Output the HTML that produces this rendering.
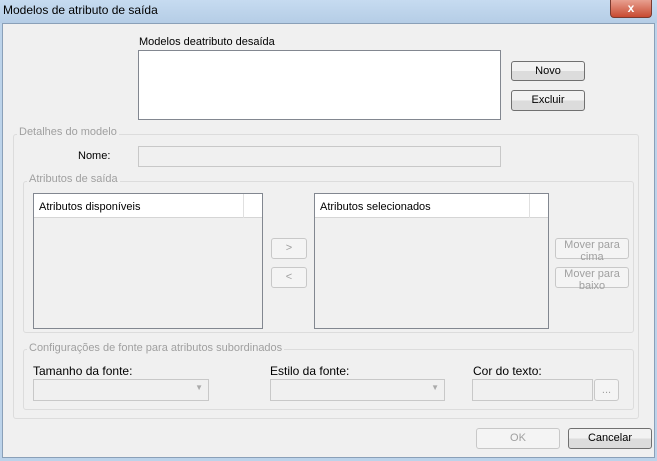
<!DOCTYPE html>
<html><head><meta charset="utf-8"><style>
*{box-sizing:border-box;margin:0;padding:0}
body{width:657px;height:461px;overflow:hidden;font-family:"Liberation Sans",sans-serif;font-size:11px;color:#000;background:#bcd3ea;position:relative}
.a{position:absolute}
.title{left:0;top:0;width:657px;height:23px;background:linear-gradient(#c6dbf0,#b5cde6)}
.client{left:2px;top:23px;width:653px;height:435px;background:#f0f0f0;border:1px solid #8aa0b8}
.btn{position:absolute;border:1px solid #707070;border-radius:3px;background:linear-gradient(#f2f2f2 50%,#dcdcdc 50%);text-align:center;font-size:11px}
.dis{border-color:#c8c8c8;background:#f4f4f4;color:#a0a0a0}
.grp{position:absolute;border:1px solid #dcdcdc;border-radius:3px}
.gl{position:absolute;background:#f0f0f0;color:#a0a0a0;padding:0 2px;font-size:11px}
.box{position:absolute;border:1px solid #abadb3}
</style></head><body>
<div class="a title"></div>
<div class="a" style="left:3px;top:3px;font-size:12px">Modelos de atributo de saída</div>
<div class="a" style="left:610px;top:0;width:42px;height:18px;background:linear-gradient(#e8a090,#c84a32);border:1px solid #7a3a30;border-top:none;border-radius:0 0 4px 4px;color:#fff;font-weight:bold;text-align:center;font-size:12px;line-height:16px">x</div>
<div class="a client"></div>
<div class="a" style="left:139px;top:36px">Modelos deatributo desaída</div>
<div class="box" style="left:138px;top:50px;width:363px;height:70px;background:#fff;border-color:#828790"></div>
<div class="btn" style="left:511px;top:61px;width:74px;height:20px;line-height:18px">Novo</div>
<div class="btn" style="left:511px;top:90px;width:74px;height:21px;line-height:19px">Excluir</div>
<div class="grp" style="left:13px;top:134px;width:626px;height:285px"></div>
<div class="gl" style="left:17px;top:126px">Detalhes do modelo</div>
<div class="a" style="left:78px;top:150px">Nome:</div>
<div class="box" style="left:138px;top:146px;width:363px;height:21px;background:#f0f0f0;border-color:#c8c8c8"></div>
<div class="grp" style="left:23px;top:181px;width:611px;height:152px"></div>
<div class="gl" style="left:27px;top:173px">Atributos de saída</div>
<div class="box" style="left:33px;top:193px;width:230px;height:136px;border-color:#828790"></div>
<div class="a" style="left:34px;top:194px;width:228px;height:24px;background:#fff;border-bottom:1px solid #d5d5d5"></div>
<div class="a" style="left:243px;top:194px;width:1px;height:24px;background:#e0e0e0"></div>
<div class="a" style="left:39px;top:201px">Atributos disponíveis</div>
<div class="box" style="left:314px;top:193px;width:235px;height:136px;border-color:#828790"></div>
<div class="a" style="left:315px;top:194px;width:233px;height:24px;background:#fff;border-bottom:1px solid #d5d5d5"></div>
<div class="a" style="left:529px;top:194px;width:1px;height:24px;background:#e0e0e0"></div>
<div class="a" style="left:320px;top:201px">Atributos selecionados</div>
<div class="btn dis" style="left:271px;top:238px;width:36px;height:21px;line-height:19px">&gt;</div>
<div class="btn dis" style="left:271px;top:267px;width:36px;height:21px;line-height:19px">&lt;</div>
<div class="btn dis" style="left:555px;top:238px;width:74px;height:21px;line-height:12px">Mover para cima</div>
<div class="btn dis" style="left:555px;top:267px;width:74px;height:21px;line-height:12px">Mover para baixo</div>
<div class="grp" style="left:23px;top:349px;width:611px;height:61px"></div>
<div class="gl" style="left:27px;top:342px">Configurações de fonte para atributos subordinados</div>
<div class="a" style="left:33px;top:364px;font-size:12px">Tamanho da fonte:</div>
<div class="box" style="left:33px;top:379px;width:176px;height:22px;background:#f0f0f0;border-color:#c8c8c8"><span style="position:absolute;right:5px;top:3px;color:#aaa;font-size:8px">▼</span></div>
<div class="a" style="left:270px;top:364px;font-size:12px">Estilo da fonte:</div>
<div class="box" style="left:270px;top:379px;width:175px;height:22px;background:#f0f0f0;border-color:#c8c8c8"><span style="position:absolute;right:5px;top:3px;color:#aaa;font-size:8px">▼</span></div>
<div class="a" style="left:473px;top:364px;font-size:12px">Cor do texto:</div>
<div class="box" style="left:472px;top:379px;width:121px;height:22px;background:#f0f0f0;border-color:#c8c8c8"></div>
<div class="btn dis" style="left:594px;top:379px;width:25px;height:22px;line-height:20px">...</div>
<div class="btn dis" style="left:476px;top:428px;width:84px;height:21px;line-height:19px">OK</div>
<div class="btn" style="left:568px;top:428px;width:84px;height:21px;line-height:19px">Cancelar</div>
</body></html>
